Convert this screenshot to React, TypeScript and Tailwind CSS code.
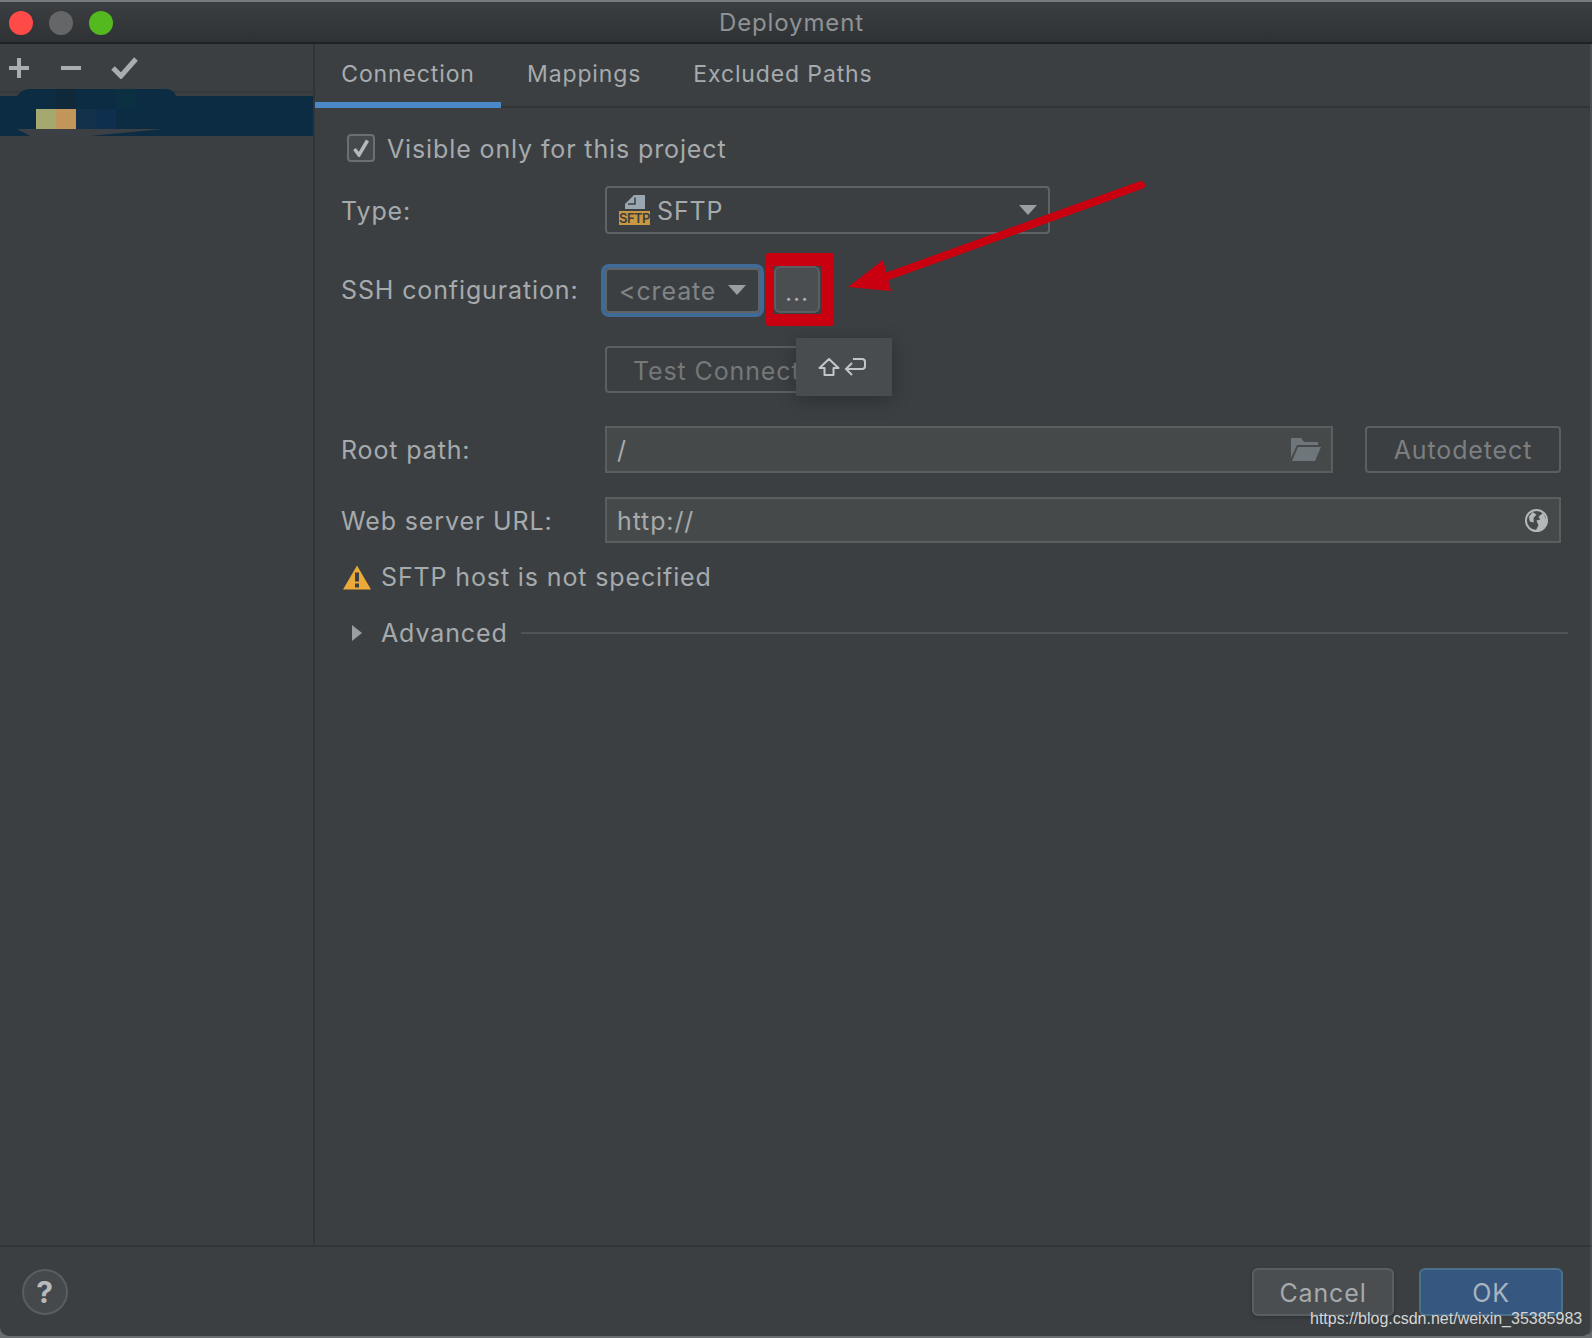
import type { ReactNode } from 'react';

const font = { fontFamily: 'Inter, "Noto Sans", sans-serif' };

function Caret({ className }: { className: string }) {
  return (
    <svg viewBox="0 0 18 10" className={className}>
      <path d="M0 0H18L9 10Z" fill="#9a9ea0" />
    </svg>
  );
}

function SftpIcon() {
  return (
    <div className="flex w-[31px] flex-col items-center">
      <svg viewBox="0 0 20 14" className="h-[14px] w-[20px]">
        <path d="M9 0H20V14H0V9Z" fill="#9aa7b0" />
        <path d="M3 9H10V2.5" fill="none" stroke="#3b3f42" strokeWidth="1.5" />
      </svg>
      <span className="mt-[2px] flex h-[14px] w-[31px] items-center justify-center bg-[#c8973f] text-[13px] font-semibold leading-none tracking-[-0.04em] text-[#3b3f42]">
        SFTP
      </span>
    </div>
  );
}

function Row({ label, children }: { label: string; children: ReactNode }) {
  return (
    <div className="flex items-center">
      <div className="w-[264px] shrink-0 pt-[2px]">{label}</div>
      {children}
    </div>
  );
}

export default function App() {
  return (
    <div
      className="relative flex h-[1338px] w-[1592px] flex-col overflow-hidden bg-[#6a6d6f] text-[25px] leading-none tracking-[0.035em] text-[#a6aaac]"
      style={font}
    >
      {/* Title bar */}
      <div className="relative flex h-[44px] shrink-0 items-center justify-center border-t-2 border-b-2 border-t-[#77797a] border-b-[#1f2122] bg-gradient-to-b from-[#3c3f41] to-[#2f3234] text-[24px] text-[#8e9294]">
        <div className="absolute left-[9px] top-[9px] flex gap-[16px]">
          <span className="h-6 w-6 rounded-full bg-[#ff4b47]" />
          <span className="h-6 w-6 rounded-full bg-[#646668]" />
          <span className="h-6 w-6 rounded-full bg-[#53b91f]" />
        </div>
        <span className="pr-[9px] pt-[2px]">Deployment</span>
      </div>

      <div className="flex min-h-0 flex-1 border-r-2 border-r-[#4c4f51] bg-[#3b3f42]">
        {/* Sidebar */}
        <div className="w-[315px] shrink-0 border-r-2 border-r-[#323537]">
          <div className="flex h-[49px] items-center border-b-2 border-b-[#35383a] pl-[9px]">
            <svg viewBox="0 0 20 20" className="h-[20px] w-[20px]">
              <path d="M10 0V20M0 10H20" stroke="#a9adaf" strokeWidth="4" />
            </svg>
            <svg viewBox="0 0 20 4" className="ml-[32px] h-[4px] w-[20px]">
              <path d="M0 2H20" stroke="#a9adaf" strokeWidth="4" />
            </svg>
            <svg viewBox="0 0 27 22" fill="none" className="ml-[30px] h-[22px] w-[27px]">
              <path d="M2 11L10 19L25 2" stroke="#a9adaf" strokeWidth="5" />
            </svg>
          </div>
          <svg viewBox="0 0 313 47" className="-mt-[4px] block h-[47px] w-[313px]">
            <path d="M0 7H17Q22 0 30 0H165Q174 0 176 7H313V47H0Z" fill="#0c2c44" />
            <rect x="56" y="0" width="20" height="20" fill="#10293a" />
            <rect x="116" y="0" width="20" height="20" fill="#0a3042" />
            <rect x="36" y="20" width="20" height="20" fill="#a5a86f" />
            <rect x="56" y="20" width="20" height="20" fill="#c2955a" />
            <rect x="76" y="20" width="20" height="20" fill="#12304a" />
            <rect x="96" y="20" width="20" height="20" fill="#0f2f4f" />
            <path d="M17 40H163L90 47H30Z" fill="#3c4044" />
          </svg>
        </div>

        {/* Main panel */}
        <div className="min-w-0 flex-1">
          <div className="flex h-[64px] text-[23px]">
            <div className="flex w-[186px] items-center justify-center border-b-[6px] border-b-[#4a88c7] pt-[3px] text-[#a9adaf]">
              Connection
            </div>
            <div className="flex flex-1 items-center gap-[52px] border-b-2 border-b-[#323537] pb-[2px] pl-[26px]">
              <span>Mappings</span>
              <span>Excluded Paths</span>
            </div>
          </div>

          <div className="pl-[26px] pr-[22px] pt-[26px]">
            <div className="flex h-[27px] items-center pl-[6px]">
              <div className="flex h-[28px] w-[28px] items-center justify-center rounded-[4px] border-2 border-[#6b6f71] bg-[#45494b]">
                <svg viewBox="0 0 16 18" fill="none" className="h-[18px] w-[16px]">
                  <path d="M1.5 10L6 16L14.5 1.5" stroke="#b4b8ba" strokeWidth="3.5" />
                </svg>
              </div>
              <span className="ml-[12px] pt-[3px]">Visible only for this project</span>
            </div>

            <div className="mt-[25px]">
              <Row label="Type:">
                <div className="flex h-[48px] w-[445px] items-center rounded-[4px] border-2 border-[#5f6365] pl-[12px] pr-[11px]">
                  <SftpIcon />
                  <span className="ml-[7px] flex-1 pt-[2px]">SFTP</span>
                  <Caret className="h-[10px] w-[18px]" />
                </div>
              </Row>
            </div>

            <div className="mt-[32px]">
              <Row label="SSH configuration:">
                <div className="mt-[1px] flex h-[45px] w-[155px] items-center rounded-[4px] border-2 border-[#5f6365] pl-[12px] pr-[12px] text-[#808486] ring-[4px] ring-[#3f6b96]">
                  <span className="flex-1 pt-[2px]">&lt;create</span>
                  <Caret className="h-[10px] w-[18px]" />
                </div>
                <div className="relative ml-[14px] flex h-[47px] w-[46px] items-center justify-center rounded-[6px] border-2 border-[#5b5f62] bg-[#4a4e50] pt-[6px]">
                  ...
                  <div className="absolute -left-[10px] -top-[15px] h-[73px] w-[68px] rounded-[3px] border-b-[12px] border-l-[8px] border-r-[13px] border-t-[13px] border-[#c9000f]" />
                </div>
              </Row>
            </div>

            <div className="relative mt-[33px] ml-[264px] flex h-[47px] w-[230px] items-center rounded-[4px] border-2 border-[#5b5f62] pl-[26px] pt-[3px] text-[#747879]">
              <span className="whitespace-nowrap">Test Connection</span>
              <div className="absolute left-[189px] -top-[10px] flex h-[58px] w-[96px] items-center justify-center bg-[#484c4e] pr-[4px] shadow-[0_4px_18px_rgba(0,0,0,0.25)]">
                <svg viewBox="0 0 48 18" fill="none" stroke="#c3c6c8" strokeWidth="2" className="h-[18px] w-[48px]">
                  <path d="M1.5 10L11 1L20.5 10H15.5V17H6.5V10Z" strokeLinejoin="round" />
                  <path d="M35 1H44Q47 1 47 4V8Q47 11 44 11H28M34 5L28 11L34 17" />
                </svg>
              </div>
            </div>

            <div className="mt-[33px] mr-[7px]">
              <Row label="Root path:">
                <div className="flex h-[47px] w-[728px] items-center border-2 border-[#5b5e5f] bg-[#45494a] pl-[10px] pr-[10px]">
                  <span className="flex-1 pt-[2px]">/</span>
                  <svg viewBox="0 0 30 23" className="h-[23px] w-[30px]">
                    <path d="M0 0H10L13 4H27V7H6L0 20Z" fill="#6e767c" />
                    <path d="M7 9H30L24 23H1Z" fill="#6e767c" />
                  </svg>
                </div>
                <div className="ml-[32px] flex h-[47px] flex-1 items-center justify-center rounded-[4px] border-2 border-[#5b5f62] pt-[2px] text-[#7b7f80]">
                  Autodetect
                </div>
              </Row>
            </div>

            <div className="mt-[24px] mr-[7px]">
              <Row label="Web server URL:">
                <div className="flex h-[46px] flex-1 items-center border-2 border-[#5b5e5f] bg-[#45494a] pl-[10px] pr-[11px]">
                  <span className="flex-1 pt-[2px]">http://</span>
                  <svg viewBox="0 0 24 24" className="h-[23px] w-[23px]">
                    <circle cx="12" cy="12" r="11" fill="#45494a" stroke="#b4b8ba" strokeWidth="2" />
                    <path d="M4 8L8 3L12 6L9 9L9 14L5 13ZM12 12L16 11L14 8L19 4L22 11V16L17 22L11 23L14 17Z" fill="#b4b8ba" />
                  </svg>
                </div>
              </Row>
            </div>

            <div className="mt-[19px] flex h-[30px] items-center pl-[2px]">
              <svg viewBox="0 0 28 24" className="h-[25px] w-[28px] shrink-0">
                <path d="M14 0L28 24H0Z" fill="#eba93a" />
                <rect x="12" y="7" width="4" height="9" fill="#3b3f42" />
                <rect x="12" y="18" width="4" height="4" fill="#3b3f42" />
              </svg>
              <span className="ml-[10px]">SFTP host is not specified</span>
            </div>

            <div className="mt-[26px] flex h-[30px] items-center">
              <svg viewBox="0 0 10 16" className="ml-[11px] h-[16px] w-[10px] shrink-0">
                <path d="M0 0L10 8L0 16Z" fill="#9a9ea0" />
              </svg>
              <span className="ml-[19px]">Advanced</span>
              <div className="ml-[13px] h-[2px] flex-1 bg-[#505456]" />
            </div>
          </div>
        </div>
      </div>

      {/* Footer */}
      <div className="flex h-[93px] shrink-0 items-start justify-between rounded-b-[10px] border-t-2 border-t-[#323537] border-r-2 border-r-[#4c4f51] border-b-[2px] border-b-[#6a6d6f] bg-[#3b3f42] pl-[22px] pr-[27px] pt-[22px]">
        <div className="flex h-[46px] w-[46px] items-center justify-center rounded-full border-2 border-[#5a5e5f] bg-[#46494b] text-[30px] text-[#b6babc]">
          <span className="font-bold">?</span>
        </div>
        <div className="-mt-px flex gap-[25px]">
          <div className="flex h-[48px] w-[142px] items-center justify-center rounded-[6px] border-2 border-[#5a5e60] bg-[#4a4e50] pt-[2px] shadow-[0_2px_4px_rgba(0,0,0,0.2)]">
            Cancel
          </div>
          <div className="flex h-[48px] w-[144px] items-center justify-center rounded-[6px] border-2 border-[#4c708c] bg-[#365880] pt-[2px] text-[#a9b4c0]">
            OK
          </div>
        </div>
      </div>

      {/* Annotation arrow and watermark */}
      <svg viewBox="0 0 1592 1338" className="pointer-events-none absolute inset-0 h-[1338px] w-[1592px]">
        <path d="M1141 185L880 279" stroke="#c9000f" strokeWidth="8" strokeLinecap="round" />
        <path d="M848 287L883 260L891 291Z" fill="#c9000f" />
      </svg>
      <span
        className="absolute left-[1310px] top-[1310px] whitespace-nowrap text-[16px] leading-[18px] tracking-normal text-[#d4d6d7]"
        style={{ fontFamily: '"Liberation Sans", Arial, sans-serif' }}
      >
        https://blog.csdn.net/weixin_35385983
      </span>
    </div>
  );
}
